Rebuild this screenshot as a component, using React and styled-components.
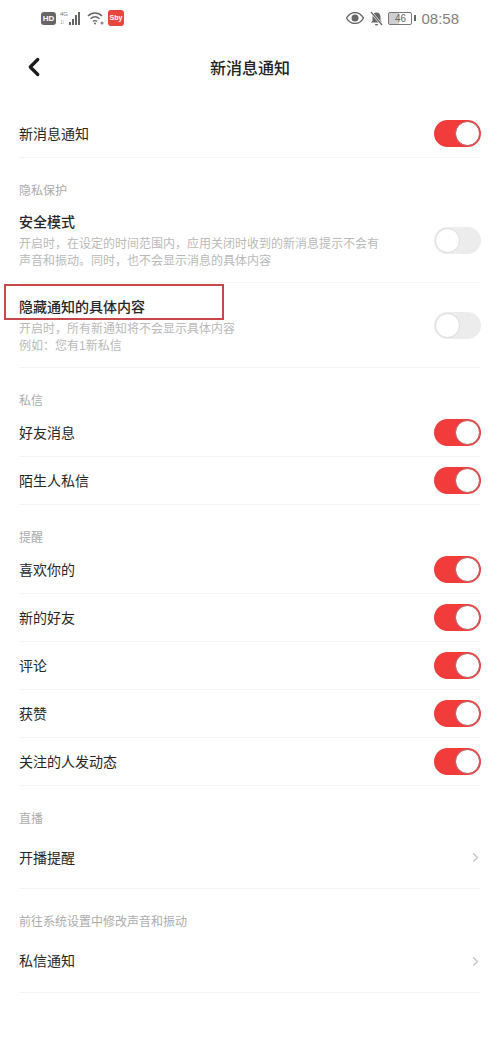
import React from 'react';
import styled, { createGlobalStyle } from 'styled-components';
import { ChevronLeft, ChevronRight } from 'lucide-react';

const GlobalStyle = createGlobalStyle`
  html, body {
    margin: 0;
    padding: 0;
    background: #fff;
  }
  body {
    font-family: "Liberation Sans", "Noto Sans CJK SC", sans-serif;
  }
`;

const Page = styled.div`
  width: 500px;
  height: 1055px;
  overflow: hidden;
  background: #fff;
  color: #2b2b2b;
`;

const StatusBar = styled.div`
  height: 36px;
  display: flex;
  align-items: center;
  justify-content: space-between;
  padding: 0 41px;
  color: #6f6f6f;
`;

const StatusGroup = styled.div`
  display: flex;
  align-items: center;
  gap: ${(p) => p.$gap || 4}px;
`;

const Hd = styled.span`
  width: 15px;
  height: 13px;
  border-radius: 3px;
  background: #666;
  color: #fff;
  font-size: 8px;
  font-weight: 700;
  line-height: 13px;
  text-align: center;
`;

const AppBadge = styled.span`
  width: 16px;
  height: 16px;
  border-radius: 3px;
  background: #e8453f;
  color: #fff;
  font-size: 7px;
  font-weight: 700;
  line-height: 16px;
  text-align: center;
`;

const Battery = styled.span`
  width: 22px;
  height: 11px;
  margin-left: -1px;
  border: 1px solid #777;
  border-radius: 2px;
  background: linear-gradient(90deg, #cfcfcf 46%, #fff 46%);
  font-size: 10px;
  line-height: 11px;
  text-align: center;
  color: #666;
`;

const BatteryCap = styled.span`
  width: 2px;
  height: 6px;
  margin-left: -3px;
  background: #666;
`;

const Clock = styled.span`
  font-size: 15px;
  color: #808080;
`;

const NavBar = styled.div`
  height: 62px;
  display: flex;
  align-items: center;
  justify-content: center;
  position: relative;
  font-size: 16px;
  font-weight: 500;
  color: #222;
`;

const Back = styled.span`
  position: absolute;
  left: 19px;
  top: 16px;
  display: flex;
  color: #1a1a1a;
`;

const Body = styled.div`
  padding: 12px 19px 0;
`;

const Row = styled.div`
  position: relative;
  display: flex;
  align-items: center;
  justify-content: space-between;
  height: ${(p) => p.$height || 48}px;
  border-bottom: 1px solid #f4f4f4;
  box-sizing: border-box;
`;

const DescRow = styled(Row)`
  align-items: flex-start;
`;

const Title = styled.div`
  font-size: 14px;
  line-height: 18px;
  font-weight: ${(p) => p.$weight || 400};
  color: #262626;
  ${(p) => p.$top && `margin-top: ${p.$top}px;`}
`;

const Desc = styled.div`
  width: 362px;
  margin-top: 5px;
  font-size: 12px;
  line-height: 17px;
  color: #b9b9b9;
`;

const Section = styled.div`
  height: ${(p) => p.$height || 40}px;
  display: flex;
  align-items: flex-end;
  font-size: 12px;
  line-height: 16px;
  color: #ababab;
`;

const Track = styled.span`
  flex: none;
  width: 47px;
  height: 27px;
  border-radius: 14px;
  box-sizing: border-box;
  padding: 1px;
  display: flex;
  justify-content: ${(p) => (p.$on ? 'flex-end' : 'flex-start')};
  background: ${(p) => (p.$on ? '#f23c3c' : '#ececec')};
  ${(p) => p.$offset && `margin-top: ${p.$offset}px;`}
`;

const Knob = styled.span`
  width: 25px;
  height: 25px;
  border-radius: 50%;
  box-sizing: border-box;
  background: #fff;
  border: 1px solid ${(p) => (p.$on ? '#b9595c' : '#dcdcdc')};
`;

const Highlight = styled.div`
  position: absolute;
  left: -15px;
  top: 1px;
  width: 220px;
  height: 36px;
  box-sizing: border-box;
  border: 2px solid #c8474a;
  pointer-events: none;
`;

const Arrow = styled.span`
  display: flex;
  color: #c4c4c4;
  margin-right: -2px;
`;

const Switch = ({ on, offset }) => (
  <Track $on={on} $offset={offset}>
    <Knob $on={on} />
  </Track>
);

const SwitchRow = ({ label, on = true }) => (
  <Row>
    <Title>{label}</Title>
    <Switch on={on} />
  </Row>
);

const LinkRow = ({ label, height }) => (
  <Row $height={height}>
    <Title>{label}</Title>
    <Arrow>
      <ChevronRight size={15} strokeWidth={2} />
    </Arrow>
  </Row>
);

const SignalIcon = () => (
  <svg width="23" height="16" viewBox="0 0 23 16">
    <text x="0" y="6" fontSize="6" fill="#777" fontFamily="Liberation Sans">4G</text>
    <text x="0" y="14" fontSize="5" fill="#aaa" fontFamily="Liberation Sans">1l</text>
    <rect x="9" y="12" width="2" height="3" fill="#666" />
    <rect x="12" y="9" width="2" height="6" fill="#666" />
    <rect x="15" y="5" width="2" height="10" fill="#666" />
    <rect x="18" y="2" width="2" height="13" fill="#666" />
  </svg>
);

const WifiIcon = () => (
  <svg width="17" height="14" viewBox="0 0 17 14" fill="none" stroke="#666" strokeWidth="1.4">
    <path d="M1 5c4-4 10-4 14 0" />
    <path d="M3.5 7.8c2.7-2.5 6.3-2.5 9 0" />
    <path d="M6 10.4c1.3-1 2.700-1 4 0" />
    <circle cx="8" cy="12.500" r="1" fill="#666" stroke="none" />
    <circle cx="15" cy="12" r="1.500" fill="#888" stroke="none" />
  </svg>
);

const EyeIcon = () => (
  <svg width="18" height="12" viewBox="0 0 18 12">
    <path d="M0.500 6C3 2 6 0.500 9 0.500S15 2 17.500 6C15 10 12 11.500 9 11.500S3 10 0.500 6Z" fill="none" stroke="#666" strokeWidth="1.300" />
    <circle cx="9" cy="6" r="3.500" fill="#666" />
  </svg>
);

const BellOffIcon = () => (
  <svg width="15" height="15" viewBox="0 0 14 15">
    <path d="M7 1.500c-2.500 0-4 2-4 4.500v3.500L1.500 11.500h11L11 9.500V6c0-2.500-1.500-4.500-4-4.500Z" fill="#666" />
    <path d="M5.500 13h3a1.500 1.500 0 0 1-3 0Z" fill="#666" />
    <path d="M1.500 1L12.500 14" stroke="#fff" strokeWidth="2.500" />
    <path d="M1.500 1L12.500 14" stroke="#666" strokeWidth="1.200" />
  </svg>
);

export default function App() {
  return (
    <Page>
      <GlobalStyle />
      <StatusBar>
        <StatusGroup>
          <Hd>HD</Hd>
          <SignalIcon />
          <WifiIcon />
          <AppBadge>Sby</AppBadge>
        </StatusGroup>
        <StatusGroup $gap={5}>
          <EyeIcon />
          <BellOffIcon />
          <Battery>46</Battery>
          <BatteryCap />
          <Clock>08:58</Clock>
        </StatusGroup>
      </StatusBar>
      <NavBar>
        <Back>
          <ChevronLeft size={30} strokeWidth={2.6} />
        </Back>
        新消息通知
      </NavBar>
      <Body>
        <SwitchRow label="新消息通知" />

        <Section $height={41}>隐私保护</Section>
        <DescRow $height={84}>
          <div>
            <Title $top={14} $weight={500}>安全模式</Title>
            <Desc>开启时，在设定的时间范围内，应用关闭时收到的新消息提示不会有声音和振动。同时，也不会显示消息的具体内容</Desc>
          </div>
          <Switch on={false} offset={28} />
        </DescRow>
        <DescRow $height={85}>
          <div>
            <Title $top={15} $weight={500}>隐藏通知的具体内容</Title>
            <Desc>开启时，所有新通知将不会显示具体内容<br />例如：您有1新私信</Desc>
          </div>
          <Switch on={false} offset={29} />
          <Highlight />
        </DescRow>

        <Section $height={41}>私信</Section>
        <SwitchRow label="好友消息" />
        <SwitchRow label="陌生人私信" />

        <Section $height={41}>提醒</Section>
        <SwitchRow label="喜欢你的" />
        <SwitchRow label="新的好友" />
        <SwitchRow label="评论" />
        <SwitchRow label="获赞" />
        <SwitchRow label="关注的人发动态" />

        <Section $height={41}>直播</Section>
        <LinkRow label="开播提醒" height={62} />

        <Section $height={41}>前往系统设置中修改声音和振动</Section>
        <LinkRow label="私信通知" height={63} />
      </Body>
    </Page>
  );
}
